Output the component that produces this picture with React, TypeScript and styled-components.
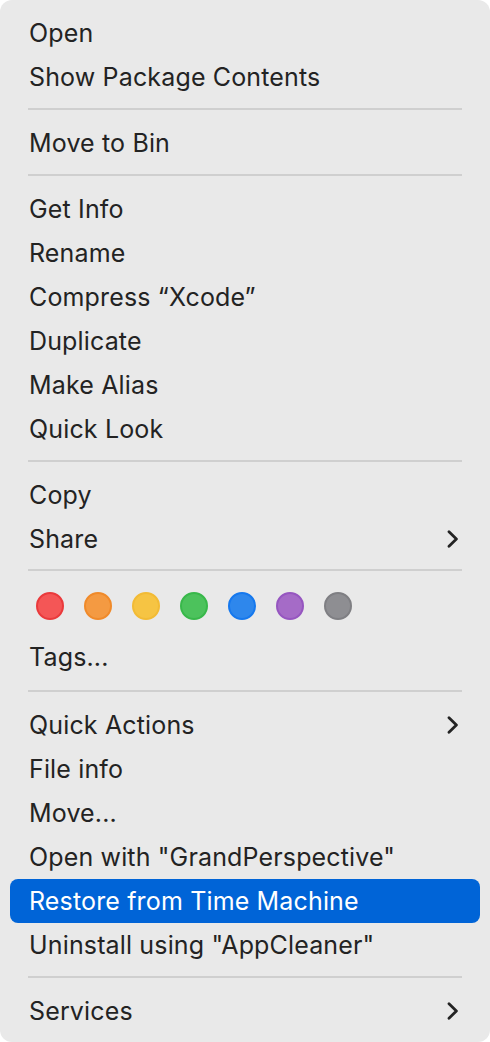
import React from "react";
import styled, { createGlobalStyle } from "styled-components";

const Global = createGlobalStyle`
  html, body { margin: 0; padding: 0; background: #ffffff; }
  body { font-family: Inter, "Noto Sans", sans-serif; -webkit-font-smoothing: antialiased; }
  #root { width: 490px; height: 1042px; }
`;

const Menu = styled.div`
  box-sizing: border-box;
  width: 490px;
  height: 1042px;
  background: #e9e9e9;
  border-radius: 12px;
  padding: 11px 10px 9px;
  display: flex;
  flex-direction: column;
`;

const Item = styled.div<{ $active?: boolean; $tall?: boolean }>`
  box-sizing: border-box;
  height: ${(p) => (p.$tall ? "46px" : "44px")};
  padding-bottom: ${(p) => (p.$tall ? "2px" : "0")};
  display: flex;
  align-items: center;
  justify-content: space-between;
  padding-left: 19px;
  padding-right: 21px;
  border-radius: 8px;
  font-size: 25px;
  letter-spacing: 0.15px;
  color: ${(p) => (p.$active ? "#ffffff" : "#232323")};
  background: ${(p) => (p.$active ? "#0064d7" : "transparent")};
  white-space: nowrap;
`;

const Separator = styled.div`
  box-sizing: border-box;
  height: 22px;
  padding: 9px 18px 11px;
  display: flex;
  &::after {
    content: "";
    flex: 1;
    height: 2px;
    background: #cfcfcf;
  }
`;

const TagRow = styled.div`
  height: 53px;
  display: flex;
  align-items: flex-start;
  gap: 20px;
  padding: 10px 0 0 26px;
  box-sizing: border-box;
`;

const Dot = styled.span<{ $fill: string; $edge: string }>`
  box-sizing: border-box;
  width: 28px;
  height: 28px;
  border-radius: 50%;
  background: ${(p) => p.$fill};
  border: 2px solid ${(p) => p.$edge};
`;

const Chevron = () => (
  <svg width="12" height="18" viewBox="0 0 12 18" fill="none">
    <path d="M2 1.8 L9.4 9 L2 16.2" stroke="#232323" strokeWidth="2.8" strokeLinecap="round" strokeLinejoin="round" />
  </svg>
);

type Entry =
  | { kind: "item"; label: string; sub?: boolean; active?: boolean; tall?: boolean }
  | { kind: "sep" }
  | { kind: "tags" };

const entries: Entry[] = [
  { kind: "item", label: "Open" },
  { kind: "item", label: "Show Package Contents" },
  { kind: "sep" },
  { kind: "item", label: "Move to Bin" },
  { kind: "sep" },
  { kind: "item", label: "Get Info" },
  { kind: "item", label: "Rename" },
  { kind: "item", label: "Compress \u201CXcode\u201D" },
  { kind: "item", label: "Duplicate" },
  { kind: "item", label: "Make Alias" },
  { kind: "item", label: "Quick Look" },
  { kind: "sep" },
  { kind: "item", label: "Copy" },
  { kind: "item", label: "Share", sub: true },
  { kind: "sep" },
  { kind: "tags" },
  { kind: "item", label: "Tags...", tall: true },
  { kind: "sep" },
  { kind: "item", label: "Quick Actions", sub: true },
  { kind: "item", label: "File info" },
  { kind: "item", label: "Move..." },
  { kind: "item", label: "Open with \"GrandPerspective\"" },
  { kind: "item", label: "Restore from Time Machine", active: true },
  { kind: "item", label: "Uninstall using \"AppCleaner\"" },
  { kind: "sep" },
  { kind: "item", label: "Services", sub: true },
];

const tags = [
  { fill: "#f45656", edge: "#ea3a3c" },
  { fill: "#f49a42", edge: "#f08a2a" },
  { fill: "#f6c443", edge: "#f2bb35" },
  { fill: "#4cc25c", edge: "#38b84a" },
  { fill: "#2e87ec", edge: "#1578ee" },
  { fill: "#a56bc7", edge: "#9656c0" },
  { fill: "#8e8e92", edge: "#7f7f83" },
];

export default function App() {
  return (
    <>
      <Global />
      <Menu>
        {entries.map((e, i) => {
          if (e.kind === "sep") return <Separator key={i} />;
          if (e.kind === "tags")
            return (
              <TagRow key={i}>
                {tags.map((t, j) => (
                  <Dot key={j} $fill={t.fill} $edge={t.edge} />
                ))}
              </TagRow>
            );
          return (
            <Item key={i} $active={e.active} $tall={e.tall}>
              <span>{e.label}</span>
              {e.sub && <Chevron />}
            </Item>
          );
        })}
      </Menu>
    </>
  );
}
